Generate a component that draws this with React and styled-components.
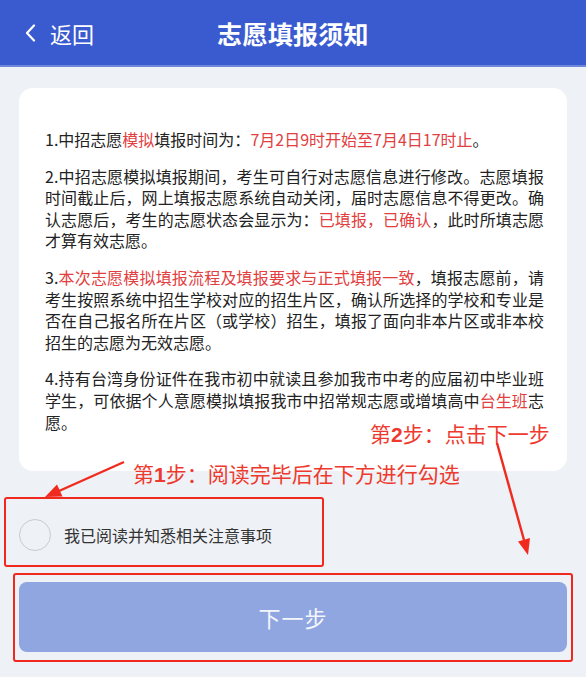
import React from "react";
import styled, { createGlobalStyle } from "styled-components";

const GlobalStyle = createGlobalStyle`
  * {
    box-sizing: border-box;
  }
  body {
    margin: 0;
    background-color: #eef1f5;
    font-family: "Noto Sans CJK SC", "Noto Sans", sans-serif;
    color: #222;
  }
`;

const NOTICES = [
  [
    "1.中招志愿",
    { red: "模拟" },
    "填报时间为：",
    { red: "7月2日9时开始至7月4日17时止" },
    "。",
  ],
  [
    "2.中招志愿模拟填报期间，考生可自行对志愿信息进行修改。志愿填报时间截止后，网上填报志愿系统自动关闭，届时志愿信息不得更改。确认志愿后，考生的志愿状态会显示为：",
    { red: "已填报，已确认" },
    "，此时所填志愿才算有效志愿。",
  ],
  [
    "3.",
    { red: "本次志愿模拟填报流程及填报要求与正式填报一致" },
    "，填报志愿前，请考生按照系统中招生学校对应的招生片区，确认所选择的学校和专业是否在自己报名所在片区（或学校）招生，填报了面向非本片区或非本校招生的志愿为无效志愿。",
  ],
  [
    "4.持有台湾身份证件在我市初中就读且参加我市中考的应届初中毕业班学生，可依据个人意愿模拟填报我市中招常规志愿或增填高中",
    { red: "台生班" },
    "志愿。",
  ],
];

function App() {
  return (
    <>
      <GlobalStyle />
      <Page>
        <Header>
          <BackButton type="button">
            <svg width="12" height="18" viewBox="0 0 12 18" fill="none">
              <polyline
                points="9,1.5 2,9 9,16.5"
                stroke="#fff"
                strokeWidth="2.2"
                strokeLinecap="round"
                strokeLinejoin="round"
              />
            </svg>
            返回
          </BackButton>
          <Title>志愿填报须知</Title>
        </Header>

        <Main>
          <Card>
            {NOTICES.map((parts, i) => (
              <Paragraph key={i}>
                {parts.map((part, j) =>
                  typeof part === "string" ? (
                    <React.Fragment key={j}>{part}</React.Fragment>
                  ) : (
                    <Red key={j}>{part.red}</Red>
                  )
                )}
              </Paragraph>
            ))}
          </Card>

          <CheckRow>
            <Circle />
            <CheckLabel>我已阅读并知悉相关注意事项</CheckLabel>
          </CheckRow>

          <NextButton type="button">下一步</NextButton>
        </Main>

        {/* annotations drawn over the screenshot */}
        <MarkBox $top={497} $left={4} $width={320} $height={70} />
        <MarkBox $top={573} $left={13} $width={560} $height={89} />
        <MarkText $top={460} $left={133}>
          第<b>1</b>步：阅读完毕后在下方进行勾选
        </MarkText>
        <MarkText $top={420} $left={370}>
          第<b>2</b>步：点击下一步
        </MarkText>
        <Arrows width="586" height="677" viewBox="0 0 586 677">
          <line x1="124" y1="462" x2="59" y2="491" stroke="#f02a1f" strokeWidth="2.4" />
          <polygon points="45,497 62.5,496.5 57,484.5" fill="#f02a1f" />
          <line x1="497" y1="443" x2="524" y2="540" stroke="#f02a1f" strokeWidth="2.4" />
          <polygon points="528,555 530,538 518,541.5" fill="#f02a1f" />
        </Arrows>
      </Page>
    </>
  );
}

const Page = styled.div`
  position: relative;
  width: 100%;
  min-height: 677px;
  overflow: hidden;
`;
const Header = styled.header`
  height: 65px;
  display: grid;
  grid-template-columns: 1fr auto 1fr;
  align-items: center;
  background-color: #3a5bd0;
  box-shadow: 0 2px 0 #6f88dc;
  color: #fff;
`;
const BackButton = styled.button`
  justify-self: start;
  display: flex;
  align-items: center;
  gap: 13px;
  margin-left: 25px;
  padding: 0;
  border: none;
  background: transparent;
  color: #fff;
  font-family: inherit;
  font-size: 22px;
  line-height: 1;
`;
const Title = styled.h1`
  margin: 0;
  font-size: 25px;
  font-weight: 700;
  letter-spacing: 0.3px;
`;
const Main = styled.main`
  padding: 23px 19px 0;
  display: flex;
  flex-direction: column;
`;
const Card = styled.section`
  background-color: #fff;
  border-radius: 14px;
  padding: 41px 23px 38px 26px;
  display: flex;
  flex-direction: column;
  gap: 15px;
`;
const Paragraph = styled.p`
  margin: 0;
  font-size: 16px;
  line-height: 21.6px;
  text-align: justify;
  color: #222;
`;
const Red = styled.span`
  color: #e2403f;
`;
const CheckRow = styled.label`
  margin-top: 34px;
  height: 60px;
  display: flex;
  align-items: center;
  gap: 13px;
`;
const Circle = styled.span`
  width: 32px;
  height: 32px;
  border-radius: 50%;
  border: 1px solid #c9cccf;
  flex-shrink: 0;
`;
const CheckLabel = styled.span`
  font-size: 16px;
  color: #333;
`;
const NextButton = styled.button`
  margin-top: 17px;
  height: 70px;
  border: none;
  border-radius: 8px;
  background-color: #90a6e1;
  color: #f4f6fc;
  font-family: inherit;
  font-size: 22px;
  letter-spacing: 1px;
`;
const MarkBox = styled.div`
  position: absolute;
  top: ${(p) => p.$top}px;
  left: ${(p) => p.$left}px;
  width: ${(p) => p.$width}px;
  height: ${(p) => p.$height}px;
  border: 2.5px solid #f0281e;
  border-radius: 3px;
  pointer-events: none;
`;
const MarkText = styled.div`
  position: absolute;
  top: ${(p) => p.$top}px;
  left: ${(p) => p.$left}px;
  font-size: 21px;
  line-height: 26px;
  color: #ee3a2e;
  white-space: nowrap;
  pointer-events: none;

  b {
    font-family: "Liberation Sans", sans-serif;
    font-weight: 700;
  }
`;
const Arrows = styled.svg`
  position: absolute;
  top: 0;
  left: 0;
  pointer-events: none;
`;

export default App;
